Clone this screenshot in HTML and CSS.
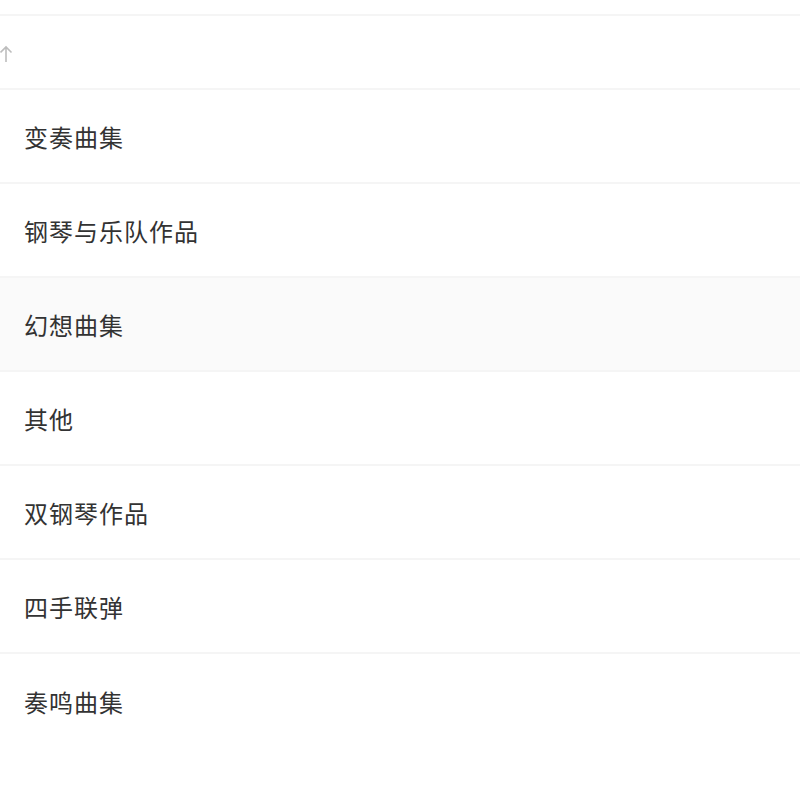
FILE: index.html
```html
<!DOCTYPE html>
<html lang="zh-CN">
<head>
    <meta charset="UTF-8">
    <meta name="viewport" content="width=device-width, initial-scale=1.0">
    <title>作品分类</title>
    <link rel="stylesheet" href="styles.css">
</head>
<body>
    <div class="list">
        <div class="list-head">
            <svg class="sort-icon" width="14" height="18" viewBox="0 0 14 18">
                <path d="M6 17V2M0.5 7.5L6 2l5.5 5.5" fill="none" stroke="#bdbdbd" stroke-width="1.6"/>
            </svg>
        </div>
        <div class="row">变奏曲集</div>
        <div class="row">钢琴与乐队作品</div>
        <div class="row hover">幻想曲集</div>
        <div class="row">其他</div>
        <div class="row">双钢琴作品</div>
        <div class="row">四手联弹</div>
        <div class="row last">奏鸣曲集</div>
    </div>
</body>
</html>
```

FILE: styles.css
```css
* {
    margin: 0;
    padding: 0;
    box-sizing: border-box;
}

body {
    background: #ffffff;
    font-family: "Noto Sans CJK SC", "Noto Sans", sans-serif;
    color: #333333;
}

.list {
    padding-top: 14px;
}

.list-head {
    height: 76px;
    border-top: 2px solid #f5f5f5;
    border-bottom: 2px solid #f5f5f5;
    display: flex;
    align-items: center;
}

.sort-icon {
    margin-top: 3px;
}

.row {
    height: 94px;
    padding-left: 24px;
    display: flex;
    align-items: center;
    font-size: 24px;
    letter-spacing: 1px;
    border-bottom: 2px solid #f5f5f5;
}

.row.hover {
    background: #fafafa;
}

.row.last {
    border-bottom: none;
}
```
